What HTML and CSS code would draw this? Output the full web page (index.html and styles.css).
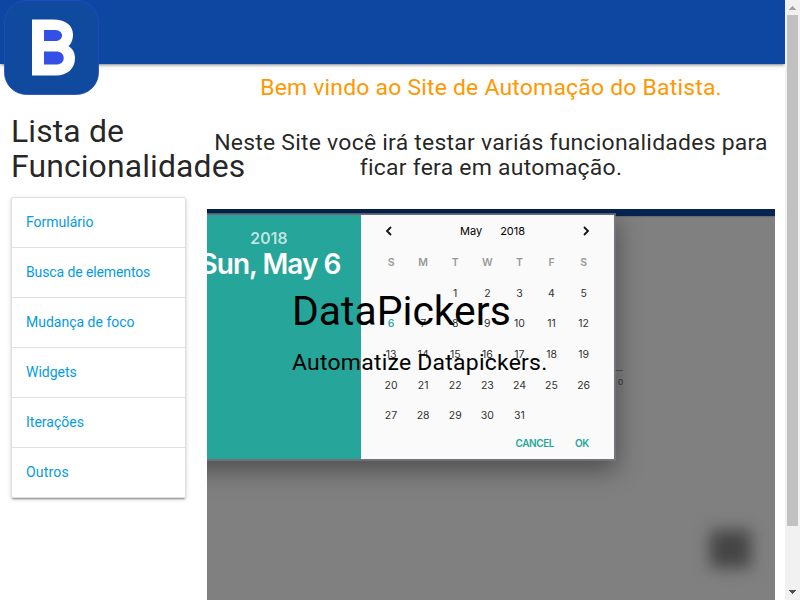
FILE: index.html
```html
<!DOCTYPE html>
<html lang="pt-BR">
<head>
<meta charset="utf-8">
<title>Automação com Batista</title>
<link rel="stylesheet" href="styles.css">
</head>
<body>
<div class="window">
  <div class="page">
    <header class="navbar">
      <svg class="logo" width="95" height="95" viewBox="0 0 95 95">
        <rect x="0.5" y="0.5" width="94" height="94" rx="22" fill="#104a9e" stroke="#2449cb" stroke-width="0.8"/>
        <path fill="#fff" fill-rule="evenodd" d="M28 19.5H49C61 19.5 69 25 69 34.5C69 40 67 44 64.500 46C69 49 71 53 71 58C71 69 63 75.500 52 75.500H28Z"/>
        <path fill="#3350e6" d="M40 30H50C55 30 58 32 58 35.500C58 39 55 41 51 41H40ZM40 51.500H52C57 51.500 59.700 54 59.700 58C59.700 62 57 64.500 52 64.500H40Z"/>
      </svg>
    </header>
    <div class="row">
      <aside class="sidebar">
        <h4>Lista de Funcionalidades</h4>
        <nav class="collection">
          <a>Formulário</a><a class="tight">Busca de elementos</a><a>Mudança de foco</a><a>Widgets</a><a>Iterações</a><a class="loose">Outros</a>
        </nav>
      </aside>
      <main class="content">
        <h5 class="welcome">Bem vindo ao Site de Automação do Batista.</h5>
        <h5 class="intro">Neste Site você irá testar variás funcionalidades para ficar fera em automação.</h5>
        <section class="slider">
          <div class="strip"></div>
          <div class="axis">0</div>
          <div class="fab"></div>
          <div class="dialog">
            <div class="date"><span class="year">2018</span><strong>Sun, May 6</strong></div>
            <div class="calendar">
              <div class="month">
                <svg width="8" height="10" viewBox="0 0 8 10"><path d="M6 1L2 5L6 9"/></svg>
                <span class="name">May</span><span>2018</span>
                <svg class="next" width="8" height="10" viewBox="0 0 8 10"><path d="M2 1L6 5L2 9"/></svg>
              </div>
              <div class="days">
                <b>S</b><b>M</b><b>T</b><b>W</b><b>T</b><b>F</b><b>S</b>
                <span class="first">1</span><span>2</span><span>3</span><span>4</span><span>5</span>
                <span class="today">6</span><span>7</span><span>8</span><span>9</span><span>10</span><span>11</span><span>12</span>
                <span>13</span><span>14</span><span>15</span><span>16</span><span>17</span><span>18</span><span>19</span>
                <span>20</span><span>21</span><span>22</span><span>23</span><span>24</span><span>25</span><span>26</span>
                <span>27</span><span>28</span><span>29</span><span>30</span><span>31</span>
              </div>
              <div class="actions"><span>CANCEL</span><span>OK</span></div>
            </div>
          </div>
          <div class="caption"><h3>DataPickers</h3><h5>Automatize Datapickers.</h5></div>
        </section>
      </main>
    </div>
  </div>
  <div class="scrollbar">
    <svg width="15" height="15" viewBox="0 0 15 15" shape-rendering="crispEdges"><path fill="#a3a3a3" d="M7 6H8V7H9V8H10V9H11V10H4V9H5V8H6V7H7Z"/></svg>
    <div class="thumb"></div>
    <svg class="down" width="15" height="15" viewBox="0 0 15 15" shape-rendering="crispEdges"><path fill="#505050" d="M4 5H11V6H10V7H9V8H8V9H7V8H6V7H5V6H4Z"/></svg>
  </div>
</div>
</body>
</html>
```
FILE: styles.css
```css
* { box-sizing: border-box; }
html, body { margin: 0; height: 600px; overflow: hidden; }
body { font: 14px/21px Roboto, sans-serif; color: rgba(0,0,0,.87); background: #fff; }
h3, h4, h5 { margin: 0; font-weight: 400; }
h4 { font-size: 31.92px; line-height: 35px; letter-spacing: .13px; }
h5 { font-size: 22.96px; line-height: 25.25px; letter-spacing: .2px; }
.window { display: flex; height: 600px; }
.page { width: 785px; height: 600px; overflow: hidden; }
.navbar { height: 64px; background: #0d47a1; box-shadow: 0 2px 2px rgba(0,0,0,.14), 0 3px 1px -2px rgba(0,0,0,.12), 0 1px 5px rgba(0,0,0,.2); position: relative; }
.logo { display: block; margin-left: 4px; }
.row { display: flex; padding: 0 10px 0 11px; }
.sidebar { width: 175px; margin-right: 21px; padding-top: 50px; flex: none; }
.collection { margin-top: 13px; border: 1px solid #e0e0e0; border-radius: 2px; box-shadow: 0 2px 2px rgba(0,0,0,.14), 0 3px 1px -2px rgba(0,0,0,.2), 0 1px 5px rgba(0,0,0,.12); }
.collection a { display: block; height: 50px; padding: 14px; color: #039be5; border-bottom: 1px solid #e0e0e0; }
.collection a:last-child { border: 0; height: 49px; }
.collection .tight { letter-spacing: -.11px; }
.collection .loose { letter-spacing: .2px; }
.content { width: 568px; text-align: center; padding-top: 11px; }
.welcome { color: #ff9800; }
.intro { margin: 29.5px 0 28.75px; letter-spacing: .24px; }
.slider { position: relative; height: 391px; overflow: hidden; background: #808080; text-align: left; color: #000; }
.strip { height: 7px; background: #06244f; box-shadow: 0 1px 1px #6c6c6c; }
.axis { position: absolute; left: 407px; top: 161px; width: 9px; border-top: 1px solid #555; font: 9px/22px "Liberation Sans", sans-serif; text-align: right; color: #333; }
.fab { position: absolute; left: 503px; top: 321px; width: 41px; height: 38px; background: #444; filter: blur(8px); }
.dialog { position: absolute; top: 6px; left: -30px; width: 437px; height: 244px; display: flex; font-family: Inter, sans-serif; box-shadow: 0 0 0 1px rgba(115,115,125,.7), 0 0 0 2px rgba(125,125,135,.65), 0 8px 24px 3px rgba(0,0,0,.4); }
.date { width: 184px; background: #26a69a; color: #fff; text-align: center; padding-top: 13px; }
.date span, .date strong { display: block; }
.year { font-size: 16px; font-weight: 600; line-height: 20px; opacity: .7; }
.date strong { font-size: 28px; line-height: 32px; font-weight: 600; letter-spacing: -1px; white-space: nowrap; margin-left: 2px; }
.calendar { flex: 1; background: #fafafa; padding: 6px 14px 0 14px; }
.month { display: flex; align-items: center; height: 20px; font-size: 11px; padding: 0 10px; }
.month svg { fill: none; stroke: #111; stroke-width: 1.8; }
.month .name { margin: 0 18px 0 67px; }
.month .next { margin-left: auto; }
.days { display: grid; grid-template-columns: repeat(7, 32.1px); grid-auto-rows: 30.7px; margin-top: 7px; text-align: center; font-size: 10.5px; line-height: 30.7px; color: #333; }
.days b { color: #999; font-weight: 600; }
.first { grid-column: 3; }
.days .today { color: #26a69a; font-weight: 500; }
.actions { display: flex; justify-content: flex-end; gap: 21px; padding-right: 11px; font-size: 10px; font-weight: 600; letter-spacing: -.4px; line-height: 20px; color: #26a69a; margin-top: 1px; }
.caption { position: absolute; left: 85px; top: 80px; white-space: nowrap; }
.caption h3 { font-size: 40.88px; line-height: 45px; }
.caption h5 { margin-top: 16px; letter-spacing: .24px; }
.scrollbar { width: 15px; height: 600px; background: #f1f1f1; display: flex; flex-direction: column; }
.scrollbar svg { display: block; }
.thumb { width: 11px; height: 511px; margin-left: 2px; background: #c1c1c1; }
.down { margin-top: auto; }
```
